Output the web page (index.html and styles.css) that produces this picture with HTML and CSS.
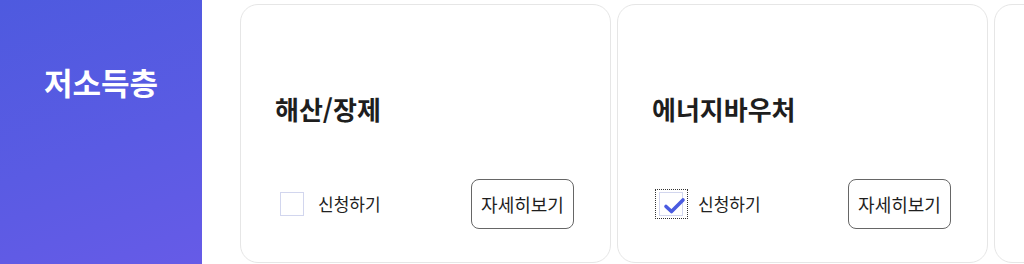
FILE: index.html
```html
<!DOCTYPE html>
<html lang="ko">
<head>
<meta charset="utf-8">
<link rel="stylesheet" href="styles.css">
</head>
<body>
<div class="page">
  <aside class="side">
    <h2 class="side-title">저소득층</h2>
  </aside>
  <div class="cards">
    <div class="card">
      <h3 class="card-title">해산/장제</h3>
      <div class="card-row">
        <label class="check">
          <span class="box"></span>
          <span class="check-label">신청하기</span>
        </label>
        <button class="detail">자세히보기</button>
      </div>
    </div>
    <div class="card">
      <h3 class="card-title">에너지바우처</h3>
      <div class="card-row">
        <label class="check checked">
          <span class="focus">
            <span class="box">
              <svg class="tick" viewBox="0 0 24 24" width="24" height="24"><path d="M4 12.5 L9.5 17.5 L21 6" fill="none" stroke="#4a5be0" stroke-width="3.6" stroke-linecap="round" stroke-linejoin="round"/></svg>
            </span>
          </span>
          <span class="check-label">신청하기</span>
        </label>
        <button class="detail">자세히보기</button>
      </div>
    </div>
    <div class="card">
      <h3 class="card-title">&nbsp;</h3>
    </div>
  </div>
</div>
</body>
</html>
```
FILE: styles.css
```css
* { box-sizing: border-box; }
html, body {
  margin: 0;
  padding: 0;
  background: #fff;
  font-family: "Noto Sans CJK KR", "Noto Sans", sans-serif;
}
.page {
  display: flex;
  width: 1024px;
  height: 264px;
  overflow: hidden;
}
.side {
  flex: 0 0 202px;
  height: 264px;
  background: linear-gradient(160deg, #4e5adf 0%, #5a5be3 55%, #665be7 100%);
  display: flex;
  justify-content: center;
  padding-top: 61px;
}
.side-title {
  margin: 0;
  color: #fff;
  font-size: 31px;
  font-weight: 700;
  line-height: 42px;
  letter-spacing: 0;
}
.cards {
  display: flex;
  gap: 6px;
  margin-left: 38px;
  padding-top: 4px;
}
.card {
  flex: 0 0 371px;
  height: 259px;
  border: 1px solid #e6e6e6;
  border-radius: 18px;
  padding: 86px 36px 0 34px;
  background: #fff;
}
.card-title {
  margin: 0;
  font-size: 26px;
  font-weight: 700;
  line-height: 36px;
  color: #1e1e1e;
}
.card-row {
  display: flex;
  align-items: center;
  justify-content: space-between;
  margin-top: 52px;
}
.check {
  display: flex;
  align-items: center;
  padding-left: 5px;
}
.box {
  width: 24px;
  height: 24px;
  border: 1px solid #d2d6ee;
  background: #fff;
  display: block;
  position: relative;
}
.checked {
  padding-left: 3px;
}
.focus {
  display: block;
  padding: 2px 4px 2px 3px;
  border: 1px dotted #333;
}
.tick {
  position: absolute;
  left: 2px;
  top: 1px;
}
.check-label {
  margin-left: 14px;
  font-size: 17px;
  color: #222;
  line-height: 24px;
}
.checked .check-label {
  margin-left: 10px;
}
.detail {
  width: 103px;
  height: 50px;
  border: 1px solid #666;
  border-radius: 8px;
  background: #fff;
  font-family: "Noto Sans CJK KR", "Noto Sans", sans-serif;
  font-size: 18px;
  font-weight: 400;
  color: #1e1e1e;
  padding: 0;
}
```
